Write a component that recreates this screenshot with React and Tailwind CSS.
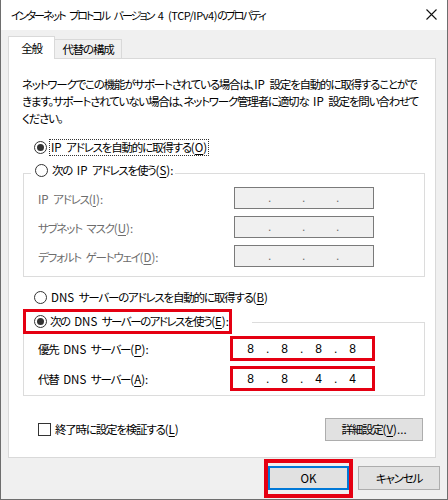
import React from "react";

const U = ({ children }) => (
  <span className="underline underline-offset-[2px] decoration-1">{children}</span>
);

const L = ({ children }) => <span className="tracking-[0px]">{children}</span>;
const Sp = () => <span className="tracking-[2px]"> </span>;

const K = ({ k, colon }) => (
  <span className="tracking-[0px]">
    (<U>{k}</U>){colon ? ":" : ""}
  </span>
);

function Radio({ checked }) {
  return (
    <span className="inline-flex h-[13px] w-[13px] shrink-0 items-center justify-center rounded-full border border-[#333333] bg-white">
      {checked && <span className="h-[7px] w-[7px] rounded-full bg-[#333333]" />}
    </span>
  );
}

function IPInner({ vals, dim }) {
  const seg = (v, k) => (
    <span key={"s" + k} className={"w-[31px] text-center " + (dim ? "text-[#6d6d6d]" : "text-black")}>
      {v}
    </span>
  );
  const dot = (k) => (
    <span key={"d" + k} className={"w-[3px] text-center " + (dim ? "text-[#6d6d6d]" : "text-black")}>
      .
    </span>
  );
  return (
    <div className="flex h-full items-center pl-[2px] font-['Liberation_Sans',sans-serif] text-[12px] leading-none tracking-normal">
      {seg(vals[0], 0)}
      {dot(0)}
      {seg(vals[1], 1)}
      {dot(1)}
      {seg(vals[2], 2)}
      {dot(2)}
      {seg(vals[3], 3)}
    </div>
  );
}

function DisabledIP() {
  return (
    <div className="h-[22px] w-[140px] border border-[#7a7a7a] bg-[#f0f0f0]">
      <IPInner vals={["", "", "", ""]} dim />
    </div>
  );
}

function RedIP({ vals }) {
  return (
    <div className="h-[25px] w-[145px] border-[3px] border-[#e50012] bg-white">
      <IPInner vals={vals} />
    </div>
  );
}

export default function App() {
  return (
    <div className="flex h-[500px] w-[448px] flex-col overflow-hidden whitespace-pre border-x border-b border-[#6e6e6e] bg-[#f0f0f0] font-['Noto_Sans_CJK_JP',sans-serif] text-[11.5px] leading-[17px] tracking-[-1.2px] text-black [font-feature-settings:'palt']">
      {/* title bar */}
      <div className="flex h-[30px] items-center justify-between bg-white pl-[10px] pr-[10px]">
        <span className="text-[11px] tracking-[-2px]">
          インターネット<Sp />プロトコル<Sp />バージョン<Sp />
          <span className="tracking-[-0.4px]">4</span>
          <Sp />
          <span className="tracking-[-0.4px]">(TCP/IPv4)</span>のプロパティ
        </span>
        <svg width="11" height="11" viewBox="0 0 11 11" className="mb-[1px]">
          <path d="M0.5 0.5 L10.5 10.5 M10.5 0.5 L0.5 10.5" stroke="#111" strokeWidth="1.1" />
        </svg>
      </div>

      {/* tabs */}
      <div className="mt-[6px] flex h-[22px] items-end pl-[7px]">
        <div className="relative z-10 mb-[-1px] flex h-[23px] w-[47px] items-center justify-center border border-b-0 border-[#d9d9d9] bg-white">
          全般
        </div>
        <div className="flex h-[19px] w-[67px] items-center justify-center border border-b-0 border-l-0 border-[#d9d9d9] bg-[#f0f0f0]">
          代替の構成
        </div>
      </div>

      {/* panel */}
      <div className="ml-[7px] flex h-[400px] w-[428px] flex-col border border-[#d9d9d9] bg-white pl-[13px] pr-[12px] pt-[17px]">
        <p>
          ネットワークでこの機能がサポートされている場合は、<L>IP</L>
          <Sp />設定を自動的に取得することがで
          <br />
          きます。サポートされていない場合は、ネットワーク管理者に適切な<Sp />
          <L>IP</L>
          <Sp />設定を問い合わせて
          <br />
          ください。
        </p>

        <div className="ml-[12px] mt-[10px] flex h-[20px] items-center gap-[2px]">
          <Radio checked />
          <span className="border border-dotted border-[#333] px-[1px] leading-[15px]">
            <L>IP</L>
            <Sp />アドレスを自動的に取得する<K k="O" />
          </span>
        </div>

        {/* group 1 */}
        <div className="relative ml-[1px] mt-[16px] flex h-[104px] w-[402px] flex-col gap-[7px] border border-[#dcdcdc] pl-[14px] pt-[13px]">
          <div className="absolute left-[7px] top-[-14px] flex h-[20px] items-center gap-[4px] bg-white pl-[4px] pr-[2px]">
            <Radio />
            <span>
              次の<Sp />
              <L>IP</L>
              <Sp />アドレスを使う<K k="S" colon />
            </span>
          </div>
          <div className="flex items-center">
            <span className="w-[196px] pt-[2px] text-[#6d6d6d]">
              <L>IP</L>
              <Sp />アドレス<K k="I" colon />
            </span>
            <DisabledIP />
          </div>
          <div className="flex items-center">
            <span className="w-[196px] pt-[2px] text-[#6d6d6d]">
              サブネット<Sp />マスク<K k="U" colon />
            </span>
            <DisabledIP />
          </div>
          <div className="flex items-center">
            <span className="w-[196px] pt-[2px] text-[#6d6d6d]">
              デフォルト<Sp />ゲートウェイ<K k="D" colon />
            </span>
            <DisabledIP />
          </div>
        </div>

        <div className="ml-[12px] mt-[10px] flex h-[20px] items-center gap-[4px]">
          <Radio />
          <span>
            <L>DNS</L>
            <Sp />サーバーのアドレスを自動的に取得する<K k="B" />
          </span>
        </div>

        {/* group 2 */}
        <div className="relative ml-[1px] mt-[15px] flex h-[74px] w-[402px] flex-col gap-[5px] border border-[#dcdcdc] pl-[14px] pt-[13px]">
          <div className="absolute left-[-1px] top-[-14px] w-[229px] bg-white">
            <div className="flex h-[25px] w-[209px] items-center gap-[3px] border-[3px] border-[#e50012] pl-[8px]">
              <Radio checked />
              <span className="tracking-[-1.5px]">
                次の<Sp />
                <L>DNS</L>
                <Sp />サーバーのアドレスを使う<K k="E" colon />
              </span>
            </div>
          </div>
          <div className="flex items-center">
            <span className="w-[192px] pt-[1px]">
              優先<Sp />
              <L>DNS</L>
              <Sp />サーバー<K k="P" colon />
            </span>
            <RedIP vals={["8", "8", "8", "8"]} />
          </div>
          <div className="flex items-center">
            <span className="w-[192px] pt-[1px]">
              代替<Sp />
              <L>DNS</L>
              <Sp />サーバー<K k="A" colon />
            </span>
            <RedIP vals={["8", "8", "4", "4"]} />
          </div>
        </div>

        <div className="mt-[22px] flex items-center justify-between">
          <div className="ml-[16px] flex items-center gap-[4px]">
            <span className="h-[13px] w-[13px] border border-[#333333] bg-white" />
            <span>
              終了時に設定を検証する<K k="L" />
            </span>
          </div>
          <button className="flex h-[23px] w-[98px] items-center justify-center border border-[#adadad] bg-[#e1e1e1]">
            詳細設定<K k="V" />
            <L>...</L>
          </button>
        </div>
      </div>

      {/* footer */}
      <div className="flex items-start justify-end pr-[7px] pt-[1px]">
        <div className="h-[39px] w-[89px] border-[4px] border-[#e50012] pt-[3px]">
          <button className="flex h-[24px] w-full items-center justify-center border-2 border-[#0078d7] bg-[#e1e1e1]">
            <L>OK</L>
          </button>
        </div>
        <button className="ml-[5px] mt-[7px] flex h-[24px] w-[82px] items-center justify-center border border-[#adadad] bg-[#e1e1e1]">
          キャンセル
        </button>
      </div>
    </div>
  );
}
